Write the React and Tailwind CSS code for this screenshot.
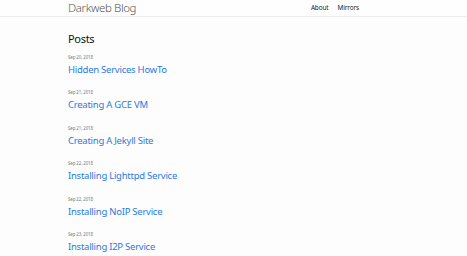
import React from "react";

const posts = [
  { date: "Sep 20, 2018", title: "Hidden Services HowTo" },
  { date: "Sep 21, 2018", title: "Creating A GCE VM" },
  { date: "Sep 21, 2018", title: "Creating A Jekyll Site" },
  { date: "Sep 22, 2018", title: "Installing Lighttpd Service" },
  { date: "Sep 22, 2018", title: "Installing NoIP Service" },
  { date: "Sep 23, 2018", title: "Installing I2P Service" },
];

function App() {
  return (
    <div className="min-h-[256px] bg-[#fdfdfd] font-['Noto_Sans',sans-serif] text-[#111]">
      <header className="h-[17px] border-b border-[#ececec] bg-[#fefefe]">
        <div className="mx-auto flex h-full w-[331px] items-center justify-between">
          <a className="text-[11.5px] font-light leading-none tracking-[-0.4px] text-[#555]">
            Darkweb Blog
          </a>
          <nav className="mr-[40px] flex gap-[9px] text-[6.4px] leading-none tracking-[-0.1px] text-[#222]">
            <a>About</a>
            <a>Mirrors</a>
          </nav>
        </div>
      </header>
      <main className="mx-auto w-[331px] pt-[14px]">
        <h2 className="mb-[6px] text-[11px] leading-[16px] tracking-[-0.3px]">Posts</h2>
        <ul className="flex flex-col gap-[11.4px]">
          {posts.map((post) => (
            <li key={post.title}>
              <span className="block text-[4.4px] leading-[8px] tracking-[-0.1px] text-[#7a7a7a]">
                {post.date}
              </span>
              <h3 className="mt-[2px] text-[9.5px] leading-[14px] tracking-[-0.25px]">
                <a className="text-[#2a7ae2]">{post.title}</a>
              </h3>
            </li>
          ))}
        </ul>
      </main>
    </div>
  );
}

export default App;
